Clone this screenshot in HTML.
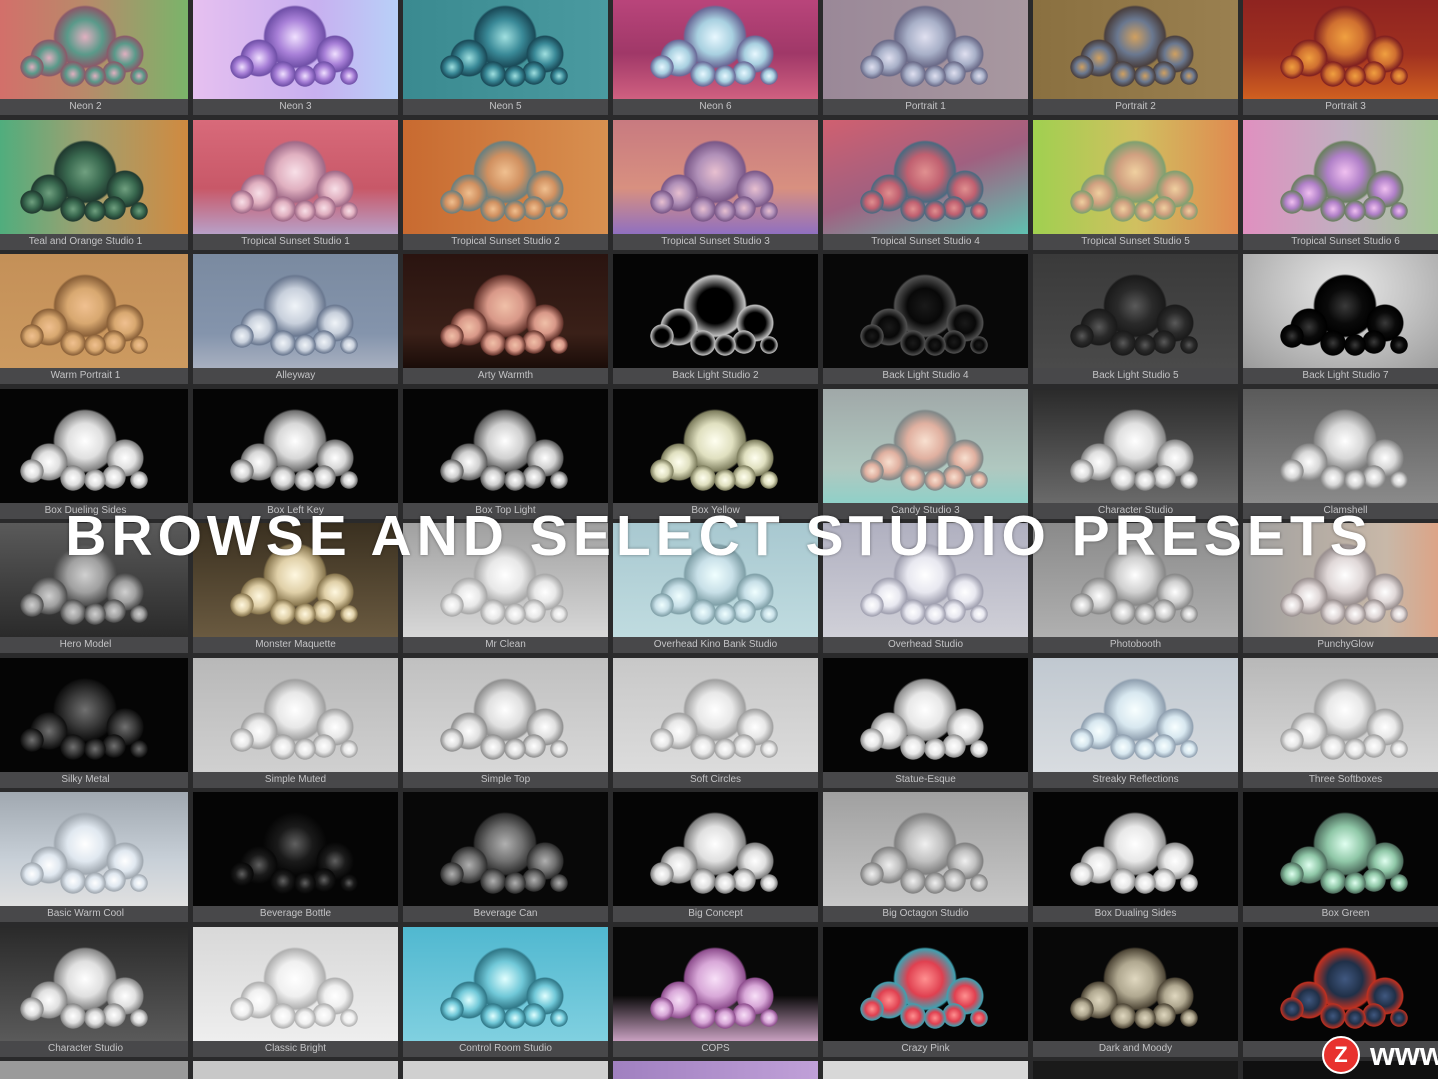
<!DOCTYPE html>
<html><head><meta charset="utf-8"><style>
html,body{margin:0;padding:0;overflow:hidden}
body{width:1438px;height:1079px;overflow:hidden;background:#2a2a2b;position:relative;font-family:"Liberation Sans",sans-serif}
.w{position:absolute;left:0;top:0;width:1438px;height:1079px;overflow:hidden}
.g{position:absolute;left:-17px;top:-15px;display:grid;grid-template-columns:repeat(7,205px);grid-auto-rows:130px;column-gap:5px;row-gap:4.5px}
.t{position:relative;background:#48484a;overflow:hidden}
.t .im{position:absolute;left:0;top:0;width:205px;height:114px;background:var(--bg)}
.t b{position:absolute;left:0;right:0;top:114px;height:16px;line-height:16px;font-weight:normal;font-size:10px;color:#c4c4c6;text-align:center;white-space:nowrap}
.cl{position:absolute;left:37px;top:20px;width:130px;height:84px;background-repeat:no-repeat;
--sp:radial-gradient(circle closest-side at 50% 50%,var(--h) 0%,var(--s) 55%,var(--d) 94%,rgba(0,0,0,0) 100%);
background-image:var(--sp),var(--sp),var(--sp),var(--sp),var(--sp),var(--sp),var(--sp),var(--sp);
background-size:18px 18px,22px 22px,24px 24px,26px 26px,24px 24px,38px 38px,38px 38px,64px 64px;
background-position:110px 62px,64px 60px,82px 56px,40px 56px,0px 50px,10px 34px,86px 30px,33px 0px}
.ti{position:absolute;left:0;width:1438px;top:503px;text-align:center;font-size:57px;font-weight:bold;color:#fff;letter-spacing:5px;text-shadow:0 0 3px rgba(0,0,0,.4)}
.wm{position:absolute;left:1322px;top:1036px;width:34px;height:34px;border-radius:50%;background:#e8322e;border:2px solid #fff;color:#fff;font-weight:bold;font-size:22px;line-height:34px;text-align:center}
.ww{position:absolute;left:1370px;top:1036px;font-size:32px;font-weight:bold;color:#fff;white-space:nowrap}
</style></head><body>
<div class="w">
<div class="g">
<div class="t" style="--bg:linear-gradient(90deg,#d86a6a,#b88a6a 50%,#7ab46a);--h:#e0b0c0;--s:#5a9a8a;--d:#8a5a6a"><div class="im"><i class="cl"></i></div><b>Neon 2</b></div>
<div class="t" style="--bg:linear-gradient(90deg,#e6c0f0,#c8b0f0 60%,#b8d0f8);--h:#f0e0ff;--s:#a880d8;--d:#7050a8"><div class="im"><i class="cl"></i></div><b>Neon 3</b></div>
<div class="t" style="--bg:linear-gradient(90deg,#3a8a90,#4a9aa0);--h:#a0e0e0;--s:#3a8a98;--d:#1a4a58"><div class="im"><i class="cl"></i></div><b>Neon 5</b></div>
<div class="t" style="--bg:linear-gradient(180deg,#c04880,#a03868 60%,#d06080);--h:#e8f8ff;--s:#a8d0e0;--d:#6a6a98"><div class="im"><i class="cl"></i></div><b>Neon 6</b></div>
<div class="t" style="--bg:linear-gradient(90deg,#9a8898,#a898a0);--h:#e0e0f0;--s:#a8b0c8;--d:#6a6a88"><div class="im"><i class="cl"></i></div><b>Portrait 1</b></div>
<div class="t" style="--bg:linear-gradient(90deg,#8a7040,#9a8050);--h:#d0a060;--s:#6a7890;--d:#4a4040"><div class="im"><i class="cl"></i></div><b>Portrait 2</b></div>
<div class="t" style="--bg:linear-gradient(180deg,#8a2020,#a03020 60%,#d06020);--h:#f0a040;--s:#d07030;--d:#802020"><div class="im"><i class="cl"></i></div><b>Portrait 3</b></div>

<div class="t" style="--bg:linear-gradient(90deg,#40b080,#a0a070 50%,#d08a40);--h:#70a080;--s:#3a6a50;--d:#203a30"><div class="im"><i class="cl"></i></div><b>Teal and Orange Studio 1</b></div>
<div class="t" style="--bg:linear-gradient(180deg,#d86a7a,#c85868 60%,#b8a0c8);--h:#f8e0e8;--s:#e0b0c0;--d:#a06a88"><div class="im"><i class="cl"></i></div><b>Tropical Sunset Studio 1</b></div>
<div class="t" style="--bg:linear-gradient(90deg,#c86a30,#d89050);--h:#f0c090;--s:#d09060;--d:#6a8080"><div class="im"><i class="cl"></i></div><b>Tropical Sunset Studio 2</b></div>
<div class="t" style="--bg:linear-gradient(180deg,#c87a80,#d89080 60%,#9070c0);--h:#e8c0d0;--s:#b090b8;--d:#7a5888"><div class="im"><i class="cl"></i></div><b>Tropical Sunset Studio 3</b></div>
<div class="t" style="--bg:linear-gradient(160deg,#d06070,#a06080 50%,#60c0b0);--h:#e09090;--s:#c06070;--d:#4a6a80"><div class="im"><i class="cl"></i></div><b>Tropical Sunset Studio 4</b></div>
<div class="t" style="--bg:linear-gradient(90deg,#a0d050,#d0c060 50%,#e08a50);--h:#f0d0a0;--s:#d0a080;--d:#80a070"><div class="im"><i class="cl"></i></div><b>Tropical Sunset Studio 5</b></div>
<div class="t" style="--bg:linear-gradient(90deg,#e090c0,#c0b0c0 50%,#a0c890);--h:#f0c0f0;--s:#b080c8;--d:#6a8060"><div class="im"><i class="cl"></i></div><b>Tropical Sunset Studio 6</b></div>

<div class="t" style="--bg:linear-gradient(180deg,#c49058,#cc9a60);--h:#f0c090;--s:#d8a870;--d:#8a6038"><div class="im"><i class="cl"></i></div><b>Warm Portrait 1</b></div>
<div class="t" style="--bg:linear-gradient(180deg,#7a8aa0 0%,#8494ac 70%,#a8b0c0);--h:#f0f4f8;--s:#c8d0dc;--d:#6a7890"><div class="im"><i class="cl"></i></div><b>Alleyway</b></div>
<div class="t" style="--bg:linear-gradient(180deg,#2a1410,#3a2018 70%,#1a0c08);--h:#f0c0a8;--s:#d89888;--d:#6a3830"><div class="im"><i class="cl"></i></div><b>Arty Warmth</b></div>
<div class="t" style="--bg:#050505;--h:#000;--s:#000;--d:#c0c0c0"><div class="im"><i class="cl"></i></div><b>Back Light Studio 2</b></div>
<div class="t" style="--bg:#080808;--h:#1a1a1a;--s:#080808;--d:#505050"><div class="im"><i class="cl"></i></div><b>Back Light Studio 4</b></div>
<div class="t" style="--bg:linear-gradient(180deg,#3a3a3a,#4a4a4a);--h:#5a5a5a;--s:#2a2a2a;--d:#1a1a1a"><div class="im"><i class="cl"></i></div><b>Back Light Studio 5</b></div>
<div class="t" style="--bg:radial-gradient(ellipse at 50% 30%,#e8e8e8,#9a9a9a);--h:#3a3a3a;--s:#0a0a0a;--d:#000"><div class="im"><i class="cl"></i></div><b>Back Light Studio 7</b></div>

<div class="t" style="--bg:#050505;--h:#ffffff;--s:#e0e0e0;--d:#808080"><div class="im"><i class="cl"></i></div><b>Box Dueling Sides</b></div>
<div class="t" style="--bg:#050505;--h:#ffffff;--s:#d8d8d8;--d:#707070"><div class="im"><i class="cl"></i></div><b>Box Left Key</b></div>
<div class="t" style="--bg:#050505;--h:#ffffff;--s:#d0d0d0;--d:#606060"><div class="im"><i class="cl"></i></div><b>Box Top Light</b></div>
<div class="t" style="--bg:#050505;--h:#fffff0;--s:#e0e0c0;--d:#808060"><div class="im"><i class="cl"></i></div><b>Box Yellow</b></div>
<div class="t" style="--bg:linear-gradient(180deg,#a0a8a8,#b0c8c0 70%,#90d0c8);--h:#f8e0d0;--s:#e0b0a0;--d:#808888"><div class="im"><i class="cl"></i></div><b>Candy Studio 3</b></div>
<div class="t" style="--bg:linear-gradient(180deg,#2a2a2a,#6a6a6a);--h:#ffffff;--s:#e0e0e0;--d:#888"><div class="im"><i class="cl"></i></div><b>Character Studio</b></div>
<div class="t" style="--bg:linear-gradient(180deg,#5a5a5a,#8a8a8a);--h:#fff;--s:#d8d8d8;--d:#888"><div class="im"><i class="cl"></i></div><b>Clamshell</b></div>

<div class="t" style="--bg:linear-gradient(180deg,#5a5a5a,#2a2a2a);--h:#d0d0d0;--s:#a0a0a0;--d:#505050"><div class="im"><i class="cl"></i></div><b>Hero Model</b></div>
<div class="t" style="--bg:linear-gradient(180deg,#3a3020,#6a5a40);--h:#fff8e0;--s:#e0d0a8;--d:#8a7850"><div class="im"><i class="cl"></i></div><b>Monster Maquette</b></div>
<div class="t" style="--bg:linear-gradient(180deg,#a0a0a0,#d8d8d8);--h:#fff;--s:#e8e8e8;--d:#a8a8a8"><div class="im"><i class="cl"></i></div><b>Mr Clean</b></div>
<div class="t" style="--bg:linear-gradient(180deg,#a8c8d0,#c0dce0);--h:#f0ffff;--s:#c8e0e8;--d:#80a0a8"><div class="im"><i class="cl"></i></div><b>Overhead Kino Bank Studio</b></div>
<div class="t" style="--bg:linear-gradient(180deg,#b0b0c0,#d0d0d8);--h:#fff;--s:#e8e8f0;--d:#a0a0b0"><div class="im"><i class="cl"></i></div><b>Overhead Studio</b></div>
<div class="t" style="--bg:linear-gradient(180deg,#8a8a8a,#b0b0b0);--h:#fff;--s:#d0d0d0;--d:#888"><div class="im"><i class="cl"></i></div><b>Photobooth</b></div>
<div class="t" style="--bg:linear-gradient(90deg,#a0a0a0,#c8b8a8 70%,#e0a080);--h:#fff;--s:#e0d8d8;--d:#9a9090"><div class="im"><i class="cl"></i></div><b>PunchyGlow</b></div>

<div class="t" style="--bg:#050505;--h:#707070;--s:#3a3a3a;--d:#101010"><div class="im"><i class="cl"></i></div><b>Silky Metal</b></div>
<div class="t" style="--bg:linear-gradient(180deg,#b8b8b8,#d0d0d0);--h:#fff;--s:#e8e8e8;--d:#a0a0a0"><div class="im"><i class="cl"></i></div><b>Simple Muted</b></div>
<div class="t" style="--bg:linear-gradient(180deg,#c0c0c0,#d8d8d8);--h:#fff;--s:#e0e0e0;--d:#909090"><div class="im"><i class="cl"></i></div><b>Simple Top</b></div>
<div class="t" style="--bg:linear-gradient(180deg,#c8c8c8,#dcdcdc);--h:#fff;--s:#e8e8e8;--d:#a0a0a0"><div class="im"><i class="cl"></i></div><b>Soft Circles</b></div>
<div class="t" style="--bg:#050505;--h:#fff;--s:#e8e8e8;--d:#909090"><div class="im"><i class="cl"></i></div><b>Statue-Esque</b></div>
<div class="t" style="--bg:linear-gradient(180deg,#c0c8d0,#d8dce0);--h:#f8ffff;--s:#d8e8f0;--d:#90a0b0"><div class="im"><i class="cl"></i></div><b>Streaky Reflections</b></div>
<div class="t" style="--bg:linear-gradient(180deg,#b8b8b8,#d8d8d8);--h:#fff;--s:#e8e8e8;--d:#a0a0a0"><div class="im"><i class="cl"></i></div><b>Three Softboxes</b></div>

<div class="t" style="--bg:linear-gradient(180deg,#a0a8b0,#c8d0d8 60%,#e0e0e0);--h:#fff;--s:#e0e8f0;--d:#a0a8b0"><div class="im"><i class="cl"></i></div><b>Basic Warm Cool</b></div>
<div class="t" style="--bg:#050505;--h:#606060;--s:#1a1a1a;--d:#080808"><div class="im"><i class="cl"></i></div><b>Beverage Bottle</b></div>
<div class="t" style="--bg:#080808;--h:#b0b0b0;--s:#707070;--d:#303030"><div class="im"><i class="cl"></i></div><b>Beverage Can</b></div>
<div class="t" style="--bg:#050505;--h:#fff;--s:#e0e0e0;--d:#808080"><div class="im"><i class="cl"></i></div><b>Big Concept</b></div>
<div class="t" style="--bg:linear-gradient(180deg,#a0a0a0,#c8c8c8);--h:#f0f0f0;--s:#c0c0c0;--d:#808080"><div class="im"><i class="cl"></i></div><b>Big Octagon Studio</b></div>
<div class="t" style="--bg:#050505;--h:#fff;--s:#e8e8e8;--d:#909090"><div class="im"><i class="cl"></i></div><b>Box Dualing Sides</b></div>
<div class="t" style="--bg:#050505;--h:#e0fff0;--s:#90c8a8;--d:#507060"><div class="im"><i class="cl"></i></div><b>Box Green</b></div>

<div class="t" style="--bg:linear-gradient(180deg,#2a2a2a,#5a5a5a);--h:#fff;--s:#e0e0e0;--d:#888"><div class="im"><i class="cl"></i></div><b>Character Studio</b></div>
<div class="t" style="--bg:linear-gradient(180deg,#d8d8d8,#eeeeee);--h:#fff;--s:#f0f0f0;--d:#b0b0b0"><div class="im"><i class="cl"></i></div><b>Classic Bright</b></div>
<div class="t" style="--bg:linear-gradient(180deg,#50b8d0,#80d0e0);--h:#e0ffff;--s:#70c8d8;--d:#307888"><div class="im"><i class="cl"></i></div><b>Control Room Studio</b></div>
<div class="t" style="--bg:linear-gradient(180deg,#080808 60%,#c8a0c0);--h:#f8e0f8;--s:#d8a8d8;--d:#905090"><div class="im"><i class="cl"></i></div><b>COPS</b></div>
<div class="t" style="--bg:#050505;--h:#ff9090;--s:#e04050;--d:#40a0b0"><div class="im"><i class="cl"></i></div><b>Crazy Pink</b></div>
<div class="t" style="--bg:#080808;--h:#e0d8c0;--s:#b0a890;--d:#504838"><div class="im"><i class="cl"></i></div><b>Dark and Moody</b></div>
<div class="t" style="--bg:#050505;--h:#405880;--s:#203048;--d:#c03020"><div class="im"><i class="cl"></i></div><b></b></div>

<div class="t" style="--bg:#9a9a9a"><div class="im"></div></div>
<div class="t" style="--bg:#c8c8c8"><div class="im"></div></div>
<div class="t" style="--bg:#d0d0d0"><div class="im"></div></div>
<div class="t" style="--bg:linear-gradient(90deg,#a080c0,#c0a0d8)"><div class="im"></div></div>
<div class="t" style="--bg:#d8d8d8"><div class="im"></div></div>
<div class="t" style="--bg:#1a1a1a"><div class="im"></div></div>
<div class="t" style="--bg:#101010"><div class="im"></div></div>
</div>
<div class="ti">BROWSE AND SELECT STUDIO PRESETS</div>
<div class="wm">Z</div><div class="ww">www</div>
</div>
</body></html>
